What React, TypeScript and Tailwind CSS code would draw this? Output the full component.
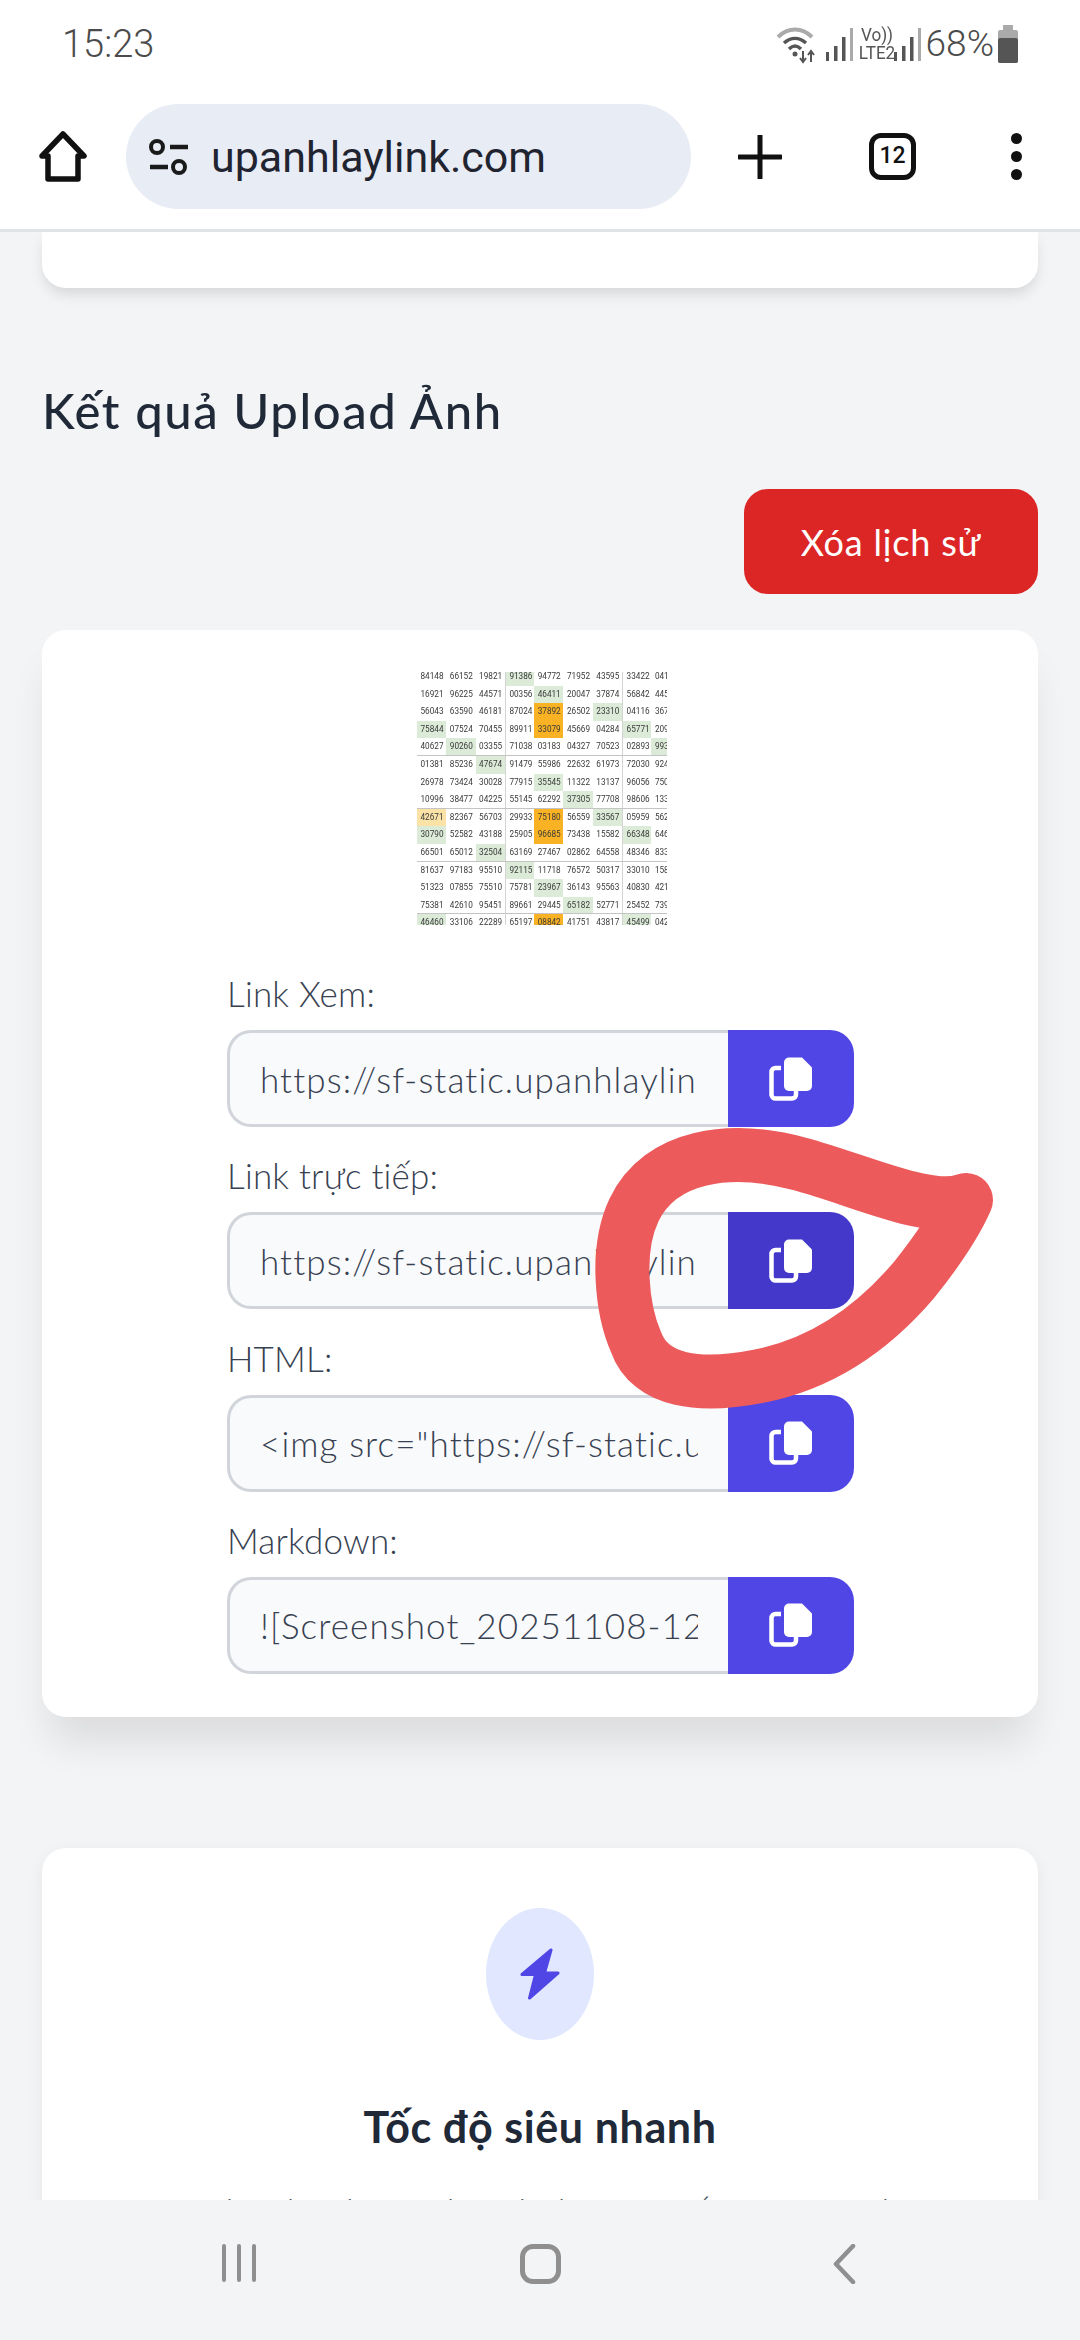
import React from "react";

const rows = [
  "84148 66152 19821 91386g 94772 71952 43595 33422 04164",
  "16921 96225 44571 00356 46411g 20047 37874 56842 44512",
  "56043 63590 46181 87024 37892o 26502 23310g 04116 36721",
  "75844g 07524 70455 89911 33079o 45669 04284 65771g 20945",
  "40627 90260g 03355 71038 03183 04327 70523 02893 99312g",
  "01381 85236 47674g 91479 55986 22632 61973 72030 92417",
  "26978 73424 30028 77915 35545g 11322 13137 96056 75012",
  "10996 38477 04225 55145 62292 37305g 77708 98606 13321",
  "42671y 82367 56703 29933 75180o 56559 33567g 05959 56217",
  "30790g 52582 43188 25905 96685o 73438 15582 66348g 64610",
  "66501 65012 32504g 63169 27467 02862 64558 48346 83312",
  "81637 97183 95510 92115g 11718 76572 50317 33010 15824",
  "51323 07855 75510 75781 23967g 36143 95563 40830 42167",
  "75381 42610 95451 89661 29445 65182g 52771 25452 73914",
  "46460g 33106 22289 65197 08842o 41751 43817 45499g 04218",
];

function cellBg(s: string) {
  if (s.endsWith("g")) return "bg-[#dcead8]";
  if (s.endsWith("o")) return "bg-[#f8b224]";
  if (s.endsWith("y")) return "bg-[#fbe3a8]";
  return "";
}

function Sheet() {
  return (
    <div className="mx-auto w-[254px] h-[253px] overflow-hidden bg-white blur-[0.35px]">
      <div className="mt-[-4px] ml-[4px] w-[270px]">
        {rows.map((r, i) => (
          <div
            key={i}
            className={
              "grid grid-cols-[repeat(9,29.3px)] h-[17.6px] " +
              (i === 4 || i === 7 || i === 10 || i === 13 ? "border-b border-[#c4c4c4]" : "")
            }
          >
            {r.split(" ").map((c, j) => (
              <div
                key={j}
                className={
                  "pl-[3.5px] overflow-hidden whitespace-nowrap text-[8.2px] leading-[17.6px] text-[#3a3a3a] font-['Roboto',sans-serif] " +
                  cellBg(c) +
                  (j === 3 || j === 7 ? " border-l border-[#d4d4d4]" : "")
                }
              >
                {c.replace(/[gyo]$/, "")}
              </div>
            ))}
          </div>
        ))}
      </div>
    </div>
  );
}

function CopyIcon() {
  return (
    <svg width="44" height="44" viewBox="0 0 44 44" fill="none">
      <path d="M12 11H6.5A4 4 0 0 0 2.5 15V38A4 4 0 0 0 6.5 41.5H23A4 4 0 0 0 27 37.5V34" stroke="white" strokeWidth="4.5" />
      <path d="M20 0.5H33L43 10.5V29A5 5 0 0 1 38 34H20A5 5 0 0 1 15 29V5.5A5 5 0 0 1 20 0.5Z" fill="white" />
    </svg>
  );
}

function LinkField({ label, value, dark }: { label: string; value: string; dark?: boolean }) {
  return (
    <div className="mb-[23.3px]">
      <div className="h-[50px] mb-[12px] text-[35px] leading-[50px] font-light text-[#374151] tracking-[0.2px] font-['Lato',sans-serif]">
        {label}
      </div>
      <div className="flex h-[97px] w-[627px]">
        <input
          readOnly
          value={value}
          className="w-[501px] h-[97px] pl-[30px] pr-[30px] rounded-l-[24px] border-[3px] border-r-0 border-[#d1d5db] bg-[#f9fafb] text-[35px] font-light text-[#374151] tracking-[1.1px] font-['Lato',sans-serif] outline-none"
        />
        <button
          className={
            "w-[126px] h-[97px] rounded-r-[24px] flex items-center justify-center " +
            (dark ? "bg-[#4338ca]" : "bg-[#4f46e5]")
          }
        >
          <CopyIcon />
        </button>
      </div>
    </div>
  );
}

function Bars() {
  return (
    <svg width="38" height="36" viewBox="0 0 38 36" fill="none">
      <rect x="2" y="26" width="3" height="9" fill="#555" />
      <rect x="10" y="20" width="3.5" height="15" fill="#555" />
      <rect x="18" y="11" width="3.5" height="24" fill="#555" />
      <rect x="26" y="2" width="3" height="33" fill="#aaa" />
    </svg>
  );
}

export default function App() {
  return (
    <div className="relative w-[1080px] h-[2340px] flex flex-col overflow-hidden bg-[#f3f4f6] font-['Lato',sans-serif]">
      {/* status bar */}
      <div className="h-[100px] bg-white flex items-start justify-between pt-[22px] pl-[62px] pr-[60px]">
        <span className="text-[38px] leading-[44px] font-light text-[#4b4b4b] font-['Roboto',sans-serif]">15:23</span>
        <div className="flex items-center h-[44px] text-[#555]">
          <svg width="46" height="40" viewBox="0 0 46 40" fill="none" className="mr-[2px]">
            <path d="M2 13C12 3 26 3 36 13" stroke="#aaa" strokeWidth="4" />
            <path d="M8 19C15 13 23 13 30 19" stroke="#555" strokeWidth="3.5" />
            <path d="M13 25C17 21 21 21 25 25" stroke="#555" strokeWidth="3.5" />
            <circle cx="19" cy="30" r="2.5" fill="#555" />
            <path d="M27 38V27M24 34L27 38L30 34M35 38V27M32 31L35 27L38 31" stroke="#555" strokeWidth="2" />
          </svg>
          <Bars />
          <div className="flex flex-col items-center text-[19px] leading-[18px] text-[#555] font-['Roboto',sans-serif] mx-[-6px] w-[42px] scale-x-90">
            <span>Vo))</span>
            <span>LTE2</span>
          </div>
          <Bars />
          <span className="text-[37px] leading-[44px] font-light text-[#4b4b4b] font-['Roboto',sans-serif] ml-[-4px]">68%</span>
          <svg width="24" height="40" viewBox="0 0 24 40" className="ml-[2px]">
            <rect x="7" y="1" width="10" height="5" fill="#aaa" />
            <rect x="2" y="6" width="20" height="33" rx="2" fill="#aaa" />
            <rect x="2" y="14" width="20" height="25" rx="2" fill="#555" />
          </svg>
        </div>
      </div>

      {/* browser toolbar */}
      <div className="h-[132px] bg-white border-b-[3px] border-[#e1e4e7] flex items-start">
        <svg width="50" height="52" viewBox="0 0 50 52" fill="none" className="ml-[38px] mt-[31px]">
          <path d="M4 25L25 3L46 25H40V48H10V25Z" stroke="#111" strokeWidth="5.5" strokeLinejoin="round" />
        </svg>
        <div className="ml-[38px] mt-[4px] w-[565px] h-[105px] rounded-full bg-[#e8ecf5] flex items-center pl-[22px]">
          <svg width="42" height="38" viewBox="0 0 42 38" fill="none">
            <circle cx="9" cy="9" r="6" stroke="#1a1a1a" strokeWidth="4" />
            <path d="M22 9H40M2 29H20" stroke="#1a1a1a" strokeWidth="4.5" />
            <circle cx="31" cy="29" r="6" stroke="#1a1a1a" strokeWidth="4" />
          </svg>
          <span className="ml-[21px] text-[43px] leading-[50px] text-[#1f2430] font-['Roboto',sans-serif]">upanhlaylink.com</span>
        </div>
        <svg width="44" height="44" viewBox="0 0 44 44" className="ml-[47px] mt-[35px]">
          <path d="M22 1V43M1 22H43" stroke="#111" strokeWidth="5" strokeLinecap="round" />
        </svg>
        <div className="ml-[87px] mt-[33px] w-[47px] h-[47px] rounded-[12px] border-[5px] border-[#111] flex items-center justify-center text-[23px] font-medium text-[#111] font-['Roboto',sans-serif]">
          12
        </div>
        <div className="ml-[95px] mt-[33px] h-[47px] flex flex-col justify-between">
          <div className="w-[11px] h-[11px] rounded-full bg-[#111]" />
          <div className="w-[11px] h-[11px] rounded-full bg-[#111]" />
          <div className="w-[11px] h-[11px] rounded-full bg-[#111]" />
        </div>
      </div>

      {/* page */}
      <div className="flex-1 overflow-hidden px-[42px] flex flex-col">
        <div className="h-[56px] shrink-0 bg-white rounded-b-[24px] shadow-[0_8px_14px_-2px_rgba(0,0,0,0.12)]" />
        <h2 className="shrink-0 mt-[92px] h-[60px] text-[49px] leading-[60px] font-medium text-[#1f2937] tracking-[1.6px]">
          Kết quả Upload Ảnh
        </h2>
        <button className="shrink-0 self-end mt-[49px] w-[294px] h-[105px] rounded-[24px] bg-[#dc2626] text-white text-[36px] tracking-[0.8px]">
          Xóa lịch sử
        </button>
        <div className="shrink-0 mt-[36px] h-[1087px] bg-white rounded-[24px] pt-[42px] shadow-[0_32px_40px_-8px_rgba(0,0,0,0.10)]">
          <Sheet />
          <div className="mt-[43px] ml-[185px]">
            <LinkField label="Link Xem:" value="https://sf-static.upanhlaylink.com/img/Screenshot_20251108-123456.jpg" />
            <LinkField label="Link trực tiếp:" dark value="https://sf-static.upanhlaylink.com/img/Screenshot_20251108-123456.jpg" />
            <LinkField label="HTML:" value='<img src="https://sf-static.upanhlaylink.com/img/Screenshot.jpg">' />
            <LinkField label="Markdown:" value="![Screenshot_20251108-123456.jpg](https://sf-static.upanhlaylink.com)" />
          </div>
        </div>
        <div className="shrink-0 mt-[131px] bg-white rounded-[24px] pt-[60px] flex flex-col items-center shadow-[0_4px_16px_rgba(0,0,0,0.06)]">
          <div className="w-[108px] h-[132px] rounded-[50%] bg-[#e0e7ff] flex items-center justify-center">
            <svg width="40" height="52" viewBox="0 0 40 52">
              <path
                d="M31 2L2 26.5H15.5L9.5 50L38 25H24.5Z"
                fill="#4f46e5"
                stroke="#4f46e5"
                strokeWidth="3"
                strokeLinejoin="round"
              />
            </svg>
          </div>
          <h3 className="mt-[57px] h-[60px] text-[43px] leading-[60px] font-bold text-[#1f2937] tracking-[0.6px]">
            Tốc độ siêu nhanh
          </h3>
          <p className="mt-[27px] text-[36px] leading-[54px] font-light text-[#4b5563] tracking-[1.2px] whitespace-nowrap">
            Upload ảnh và nhận link trực tiếp trong tích
          </p>
        </div>
      </div>

      {/* android nav */}
      <div className="h-[140px] shrink-0 bg-[#f3f4f6] flex items-start pt-[44px] relative z-10">
        <div className="ml-[222px] flex gap-[11px] h-[38px]">
          <div className="w-[4px] h-full bg-[#8f8f8f] rounded-full" />
          <div className="w-[4px] h-full bg-[#8f8f8f] rounded-full" />
          <div className="w-[4px] h-full bg-[#8f8f8f] rounded-full" />
        </div>
        <div className="ml-[264px] w-[41px] h-[40px] rounded-[13px] border-[5px] border-[#8f8f8f]" />
        <svg width="24" height="40" viewBox="0 0 24 40" fill="none" className="ml-[271px]">
          <path d="M21 2L4 20L21 38" stroke="#8f8f8f" strokeWidth="4.5" strokeLinecap="round" strokeLinejoin="round" />
        </svg>
      </div>

      {/* hand-drawn annotation over the page */}
      <svg className="absolute left-0 top-0 pointer-events-none z-20" width="1080" height="2340" fill="none">
        <path
          d="M966 1200C930 1214 860 1180 800 1164C730 1145 660 1155 634 1210C615 1250 622 1310 636 1342C650 1382 700 1388 760 1376C830 1362 880 1320 914 1280C938 1250 955 1225 966 1200"
          stroke="#ec5a5c"
          strokeWidth="54"
          strokeLinecap="round"
          strokeLinejoin="round"
        />
      </svg>
    </div>
  );
}
